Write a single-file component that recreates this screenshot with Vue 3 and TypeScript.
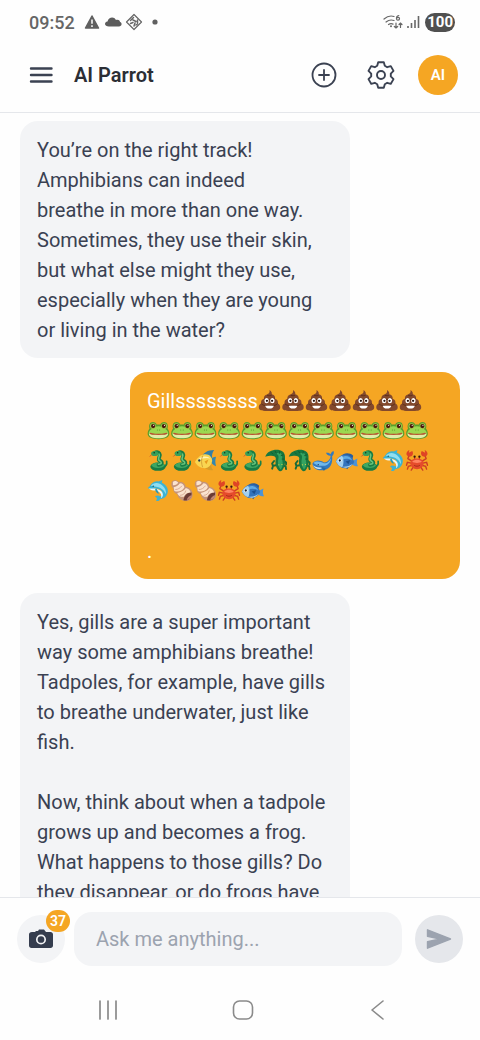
<script setup lang="ts">
import { ref } from 'vue'

type Part = { text?: string; emoji?: string[] }
interface Message {
  id: number
  from: 'parrot' | 'child'
  lines: Part[][]
}

const fill = (name: string, count: number): string[] => Array.from({ length: count }, () => name)

const messages: Message[] = [
  {
    id: 1,
    from: 'parrot',
    lines: [
      [{ text: 'You’re on the right track! Amphibians can indeed' }],
      [{ text: 'breathe in more than one way. Sometimes, they use their skin, but what else might they use, especially when they are young or living in the water?' }],
    ],
  },
  {
    id: 2,
    from: 'child',
    lines: [
      [{ text: 'Gillssssssss' }, { emoji: fill('poo', 7) }],
      [{ emoji: fill('frog', 12) }],
      [{ emoji: ['snake', 'snake', 'tropical-fish', 'snake', 'snake', 'crocodile', 'crocodile', 'whale', 'fish', 'snake', 'dolphin', 'crab'] }],
      [{ emoji: ['dolphin', 'shell', 'shell', 'crab', 'fish'] }],
      [],
      [{ text: '.' }],
    ],
  },
  {
    id: 3,
    from: 'parrot',
    lines: [
      [{ text: 'Yes, gills are a super important way some amphibians breathe! Tadpoles, for example, have gills to breathe underwater, just like fish.' }],
      [],
      [{ text: 'Now, think about when a tadpole grows up and becomes a frog. What happens to those gills? Do they disappear, or do frogs have' }],
    ],
  },
]

const draft = ref('')
const photosLeft = 37
</script>

<template>
  <div class="screen">
    <svg class="sprites" aria-hidden="true">
      <symbol id="poo" viewBox="0 0 24 24">
        <path d="M12 1c2 1.500 3 3 2.200 4.600 2.600.4 4 2.200 3.600 4.500 2.400.7 3.500 2.700 2.900 5 2 .9 3 3 2.300 5.200-.9 2.400-3.600 2.700-11 2.700S1.900 22.700 1 20.300c-.7-2.200.3-4.300 2.300-5.200-.6-2.300.5-4.300 2.900-5-.4-2.400 1-3.800 3.200-4.400C11.300 5 12.600 3.500 12 1z" fill="#83492c" />
        <path d="M9.500 6.500c2 .8 3.500.6 4.800-.2M6.500 10.300c4 1.200 8 .8 11-.6M3.500 15.500c2 1.500 4 2 6 2M20.500 15.200c-1.500 1.500-3.500 2.200-6 2.400" fill="none" stroke="#5a2d18" stroke-width="1" />
        <ellipse cx="9" cy="12.200" rx="2.300" ry="2.700" fill="#fff" /><ellipse cx="15" cy="12.200" rx="2.300" ry="2.700" fill="#fff" />
        <circle cx="9.300" cy="12.300" r="1.200" fill="#29140d" /><circle cx="14.700" cy="12.300" r="1.200" fill="#29140d" />
        <path d="M7.500 17.400h9c-.6 2-2 3-4.500 3s-3.900-1-4.500-3z" fill="#fff" />
      </symbol>
      <symbol id="frog" viewBox="0 0 24 24">
        <path d="M2.600 10C1.500 6 3 3 6.200 3c2.200 0 3.400 1.200 3.900 2.700h3.800C14.400 4.200 15.600 3 17.800 3 21 3 22.500 6 21.400 10c1.500 2 2.200 4.500 1.800 6.500C22.300 19.600 18 21 12 21S1.700 19.600.8 16.500C.4 14.500 1.100 12 2.600 10z" fill="#5a9e2c" />
        <path d="M5 10.500C8 6.500 16 6.500 19 10.500c2.200 1.500 3.500 3 3 5C18 18.500 6 18.500 2 15.500c-.5-2 .8-3.500 3-5z" fill="#9bd850" />
        <circle cx="6.200" cy="7.400" r="3" fill="#a8c648" /><circle cx="17.800" cy="7.400" r="3" fill="#a8c648" />
        <circle cx="6.400" cy="7.400" r="2.200" fill="#4b170e" /><circle cx="17.600" cy="7.400" r="2.200" fill="#4b170e" />
        <circle cx="7" cy="6.600" r=".6" fill="#fff" /><circle cx="18.200" cy="6.600" r=".6" fill="#fff" />
        <path d="M2 15c4 2 6 1.500 10 1.500S18 17 22 15c0 3.500-4.500 5-10 5S2 18.500 2 15z" fill="#e3eda8" />
        <path d="M3.500 15c3 1.400 5 .6 8.500 1 3.500-.4 5.500.4 8.500-1" fill="none" stroke="#bd4d35" stroke-width="1.200" stroke-linecap="round" />
        <circle cx="10.800" cy="11.500" r=".5" fill="#37651c" /><circle cx="13.200" cy="11.500" r=".5" fill="#37651c" />
      </symbol>
      <symbol id="snake" viewBox="0 0 24 24">
        <path d="M17 19c3-1 4-3 3.500-6" fill="none" stroke="#1b8047" stroke-width="1.800" stroke-linecap="round" />
        <ellipse cx="11.500" cy="18.500" rx="8" ry="4.300" fill="#197c44" />
        <ellipse cx="11.500" cy="17" rx="6.500" ry="2.800" fill="#3fa762" />
        <path d="M12 16.500c4-.5 4.500-2.500 1.500-4.200C10 10.500 15 7.500 13 4.800 11.800 3 9.500 3 8 4.200" fill="none" stroke="#197c44" stroke-width="4" stroke-linecap="round" />
        <path d="M12 16c4-.5 3.500-2.300 1-3.700-3-1.700 1.300-4.800-.5-7" fill="none" stroke="#69c47b" stroke-width="1.600" stroke-linecap="round" />
        <ellipse cx="8" cy="4.700" rx="3.700" ry="2.700" fill="#35a05a" /><circle cx="7.500" cy="4" r=".8" fill="#172b19" />
        <path d="M4.800 6 3 7.800" stroke="#c93f32" stroke-width=".8" />
      </symbol>
      <symbol id="tropical-fish" viewBox="0 0 24 24">
        <path d="M8 8C10 4 14 1 21 1c-2 3-2.500 5-2 9z" fill="#347ea4" />
        <path d="M9 17c3 4 7 6 11 5-2-2-2-4-2-6" fill="#d79c28" />
        <path d="M17 12c1.500-3 3.500-4 6-4-1 3-1 6 0 10-3-1-5-3-6-6z" fill="#3487ae" />
        <path d="M1 13.500C4 8 8 5.500 12 5.500c4.500 0 6.500 3 7 7-1 4.500-4 7.500-8 7.500s-8-2.500-10-6.500z" fill="#f9d551" />
        <path d="M4 11c4-4 10-4 13-1-3-1-8-1-11 2z" fill="#fff5b6" />
        <path d="M9 7c-1.500 4-1.500 8 0 12" fill="none" stroke="#d2a136" stroke-width="1" />
        <path d="m11 13 4-2-2 5z" fill="#e79b1e" /><circle cx="5.500" cy="12" r="1.200" fill="#25394a" />
      </symbol>
      <symbol id="crocodile" viewBox="0 0 24 24">
        <path d="M10 12.500 8 15l.5 2M12 17l-3 .5-1 3M20 12l2.500 2v2M19 17l3 1 .5 3" fill="none" stroke="#176b39" stroke-width="2" stroke-linecap="round" />
        <path d="M.8 8C3 2 10 0 16 1.200c4.500 1 6 4.800 5.300 9.300.7 4-.3 9-3 12-1.300 1-2.800 1-3.800-.3C11.500 19 11 14.500 11.800 10c.2-3-4-4-11-2z" fill="#187840" />
        <path d="M16 4c3.500 2 2 6 3 10 .2 3-.8 6-2.300 7.500C14 18 13.500 14 14.500 10 15 7.500 14.500 5.500 11 4.500z" fill="#35a360" />
        <path d="M7 3.500 9 5.500M11 2l1.500 3M16 2l-.5 3M20 6l-3 1M21 10.500h-3" stroke="#0f5930" stroke-width=".9" />
        <circle cx="15" cy="16.500" r=".6" fill="#e8d948" /><circle cx="18.200" cy="16.200" r=".6" fill="#e8d948" />
      </symbol>
      <symbol id="whale" viewBox="0 0 24 24">
        <path d="M1 15c3-4 8-3.500 12-1 4 0 6.500-3 7-7-2 .2-4-.5-5-3 2.500-.5 4 .2 5 1.500.2-1.500 1.500-3 3-3.500.8 2 .2 4-1.500 5.500C22.500 15 19.500 21 13 22 6 23 1.500 20 1 15z" fill="#347abd" />
        <path d="M2 14.500c3-2.500 7-1.500 11 .3 4 .2 6-2.300 7.500-5.800-.5 5-3.500 8.500-8 8.500-4 .2-7.500-.5-10.500-3z" fill="#72b9ea" />
        <path d="M1.500 17c3 2 6 2.500 10 2.500-3 2.500-8 1.500-10-2.500z" fill="#c7e5f6" />
        <path d="m10 18.500 5 1.500-2 3z" fill="#246da9" /><circle cx="7" cy="16.300" r=".7" fill="#152f4b" />
      </symbol>
      <symbol id="fish" viewBox="0 0 24 24">
        <path d="M6 8c2-4 9-5 13-1l-1 4M8 17l5 4 2-5" fill="#285e9e" />
        <path d="m17 13 6.500-3c-1 3-1 5 .5 8-3 0-5.500-1-7-3z" fill="#4c93d6" />
        <path d="M1 13c2-5 6-7 10-7 5 0 8 4 9 7.500-2 4.500-6 6.500-10 6.500-4 0-7-3-9-7z" fill="#3474bd" />
        <path d="M8 8c4-1.500 8 0 10 4-3-2-7-2.500-10-1z" fill="#5faae4" />
        <path d="M1 13c2-4 4-5 6.500-6 1.800 3 1.800 9 0 12C4.800 18.300 3 16.500 1 13z" fill="#a2d0ef" />
        <path d="M7.500 18.500c4 .5 8-.5 11-3-2.500 4-7 5-11 3z" fill="#b7d9e8" />
        <path d="m11 13 5-1.500-2 4.500z" fill="#1d5192" /><circle cx="5" cy="12" r="1.900" fill="#fff" /><circle cx="5" cy="12" r="1.200" fill="#12253a" />
      </symbol>
      <symbol id="dolphin" viewBox="0 0 24 24">
        <path d="M.8 9.500c.7-1 2-1.500 2.700-3C5.500 3 9 2 12 2.500L16 1c-.2 1.200-.3 2-.5 3C21 6.500 23.500 12 20.500 17c-1.500 3-4.500 3.800-7 4-.5 1.800-2 2.200-4 2l1-3-2.200-2c2.200-1 4-.8 5.500.2 2-1.200 2.500-3.200 1.700-5.200-2-3-5-3.500-8-3-2.500.8-5 .8-6.700-.5z" fill="#3cb3d3" />
        <path d="M4 7c3-4 9-3.500 12-.2 3 2.800 4.500 6.200 3.500 9.200C17.500 9.500 12 8 4 7z" fill="#90def0" />
        <path d="M2 9.800C6 10 13 9 16 14c1.200 2.500.5 5-1.500 6 1.500-4-1-7-6-8-2 0-5-.5-6.500-2.200z" fill="#e5f8fa" />
        <path d="m10 10 2.500 5.500C10 15 8.500 13 8.500 10.500z" fill="#2699ba" /><circle cx="6.500" cy="7.500" r=".7" fill="#164452" />
      </symbol>
      <symbol id="shell" viewBox="0 0 24 24">
        <path d="M1.500 2.500C3.500.500 6.500 1 8.500 3c4-.5 6.500 1.500 7.500 5 5 .8 7.500 4.500 7 9-.3 3.800-3.300 6-7 6-5 0-8-3-9-7-3-1-4.300-3-4-6C.800 8 .2 5 1.500 2.500z" fill="#c59479" />
        <path d="M2.500 3C4 1.500 7 2 8 4c-1 2-3.500 3-5.500 2.500zM3.300 8.500c2.200-.3 5-1.500 6.500-4 3 0 4.200 2 4.700 4-2 4-6.500 5.500-10.500 4zM7 14.500c3.500-.5 7-2 9-5 3 .8 4.800 2.500 5 5-3-1-6 1-7 4-3 .5-6-1-7-4z" fill="#fae3cf" />
        <path d="M5 11c3 0 5-1.500 7-4M10 17c3 0 5-1.500 6-5" fill="none" stroke="#cf9e88" stroke-width=".8" />
        <path d="M22 14c-5 0-8 3.500-8.500 8.300C18 23.500 22.500 20 22 14z" fill="#6b3b35" /><path d="M22 17c-2.500.5-4.500 2.500-5 5 3-.5 5-2.500 5-5z" fill="#c18674" />
      </symbol>
      <symbol id="crab" viewBox="0 0 24 24">
        <path d="M7 13 2.500 10l1-3M17 13l4.500-3-1-3M7 15l-5-1-1 3M7 17l-4 1-1 3M8 19l-2 3M17 15l5-1 1 3M17 17l4 1 1 3M16 19l2 3" fill="none" stroke="#cd3e25" stroke-width="1.500" stroke-linecap="round" />
        <path d="M4 8C0 7 0 3 4 1l-.5 3L7 2c2 3 0 6-3 6zM20 8c4-1 4-5 0-7l.500 3L17 2c-2 3 0 6 3 6z" fill="#df4425" />
        <path d="M9.500 11V8M14.500 11V8" stroke="#d43c20" stroke-width="1.200" />
        <path d="M5 14c1-3 4-4 7-4s6 1 7 4c0 4-3 7-7 7s-7-3-7-7z" fill="#e54b2b" />
        <path d="M7 13c3-2.500 7-2.500 10 0-2 2-8 2-10 0z" fill="#ff8462" />
        <path d="M9 17c2 1.300 4 1.300 6 0" fill="none" stroke="#982412" stroke-width=".8" />
        <circle cx="9.500" cy="8" r="1.200" fill="#33160f" /><circle cx="14.500" cy="8" r="1.200" fill="#33160f" />
      </symbol>
    </svg>

    <div class="status">
      <time class="clock">09:52</time>
      <svg class="status-left" width="76" height="20" viewBox="0 0 76 20" aria-hidden="true">
        <path d="M8 4 14.500 16h-13z" fill="#606060" stroke="#606060" stroke-width="1.500" stroke-linejoin="round" />
        <path d="M8 7.500v4.300M8 13.300v1.600" stroke="#fff" stroke-width="1.500" />
        <path d="M25 14.500c-5 0-5-4.500-1.500-5C24.500 5 30 4 32 8c3-.6 4 1 4 2 2.500.5 2 4.500-1 4.500z" fill="#5c5c5c" />
        <path d="m50 2.500 7.500 7.500-7.500 7.500-7.500-7.500z" fill="none" stroke="#666" stroke-width="1.200" stroke-linejoin="round" />
        <path d="m46.500 8.500 3-3M49 8l3 1.500M53.500 8v3M46.500 11.500l2.500-1M51 11l-1 3M52 13l1.500-1" fill="none" stroke="#666" stroke-width="1.500" stroke-linecap="round" />
        <circle cx="71" cy="10" r="2.600" fill="#606060" />
      </svg>
      <svg class="status-right" width="38" height="20" viewBox="0 0 38 20" aria-hidden="true">
        <g fill="none" stroke="#686868" stroke-width="1.200" stroke-linecap="round">
          <path d="M1 7c3.500-3 7-3.500 10-2.500M3 10c2.500-2 5-2.600 8-1.500M5.500 12.500c1.500-1 3-1.200 4.500-.4" />
          <path d="M15.800 3.500c-2 .3-2.500 1.800-2.300 3.500.2 1.700 3 1.500 3-.3 0-1.500-2-1.700-2.900-.5" />
          <path d="M13 11v5m-1.700-1.500L13 16l1.700-1.500M17.500 15.500V11m-1.500 1.500 1.500-1.500 1.500 1.500" />
        </g>
        <circle cx="8" cy="14.300" r="1" fill="#686868" />
        <path d="M25 16v-2M28.500 16v-5M32 16V8M35.500 16V4" fill="none" stroke="#686868" stroke-width="1.600" />
      </svg>
      <span class="battery">100</span>
    </div>

    <header class="header">
      <button class="icon-button" type="button" aria-label="Open menu">
        <svg width="24" height="20" viewBox="0 0 24 20"><path d="M2 3.500h20.500M2 10h20.500M2 16.500h20.500" fill="none" stroke="#3b4252" stroke-width="2.400" stroke-linecap="round" /></svg>
      </button>
      <h1 class="title">AI Parrot</h1>
      <button class="icon-button" type="button" aria-label="New chat">
        <svg width="28" height="28" viewBox="0 0 28 28"><g fill="none" stroke="#3b4252" stroke-width="1.800" stroke-linecap="round"><circle cx="14" cy="14" r="11.500" /><path d="M14 9v10M9 14h10" /></g></svg>
      </button>
      <button class="icon-button gear" type="button" aria-label="Settings">
        <svg width="30" height="30" viewBox="-15 -15 30 30"><g fill="none" stroke="#3b4252" stroke-width="1.900" stroke-linejoin="round"><path d="M-2.800-12.700h5.600L3.800-9.200 6.200-7.800l3.600-1.100 2.700 4.800-2.700 2.700v2.800l2.700 2.700-2.700 4.800-3.600-1.100L3.800 9.200l-1 3.500h-5.600l-1-3.500-2.400-1.400-3.600 1.100-2.700-4.800 2.700-2.700v-2.800l-2.700-2.700 2.700-4.800 3.600 1.100 2.400-1.400z" /><circle r="4" /></g></svg>
      </button>
      <button class="avatar" type="button" aria-label="Account">AI</button>
    </header>

    <main class="chat">
      <article v-for="message in messages" :key="message.id" class="bubble" :class="message.from">
        <p v-for="(line, i) in message.lines" :key="i" class="line">
          <template v-for="(part, j) in line" :key="j">
            <span v-if="part.text">{{ part.text }}</span>
            <svg
              v-else-if="part.emoji"
              class="emoji"
              role="img"
              :aria-label="part.emoji.join(' ')"
              :width="Math.round(part.emoji.length * 23.5)"
              height="23"
            >
              <use v-for="(name, k) in part.emoji" :key="k" :href="'#' + name" :x="k * 23.5" y="0" width="23" height="23" />
            </svg>
          </template>
        </p>
      </article>
    </main>

    <form class="composer" @submit.prevent="draft = ''">
      <button class="round camera" type="button" aria-label="Add photo">
        <svg width="26" height="22" viewBox="0 0 26 22"><path d="M4 4h3.500V3H10l1-1.500h5L18 4h4.500C24 4 25 5 25 6.500v11c0 1.500-1 2.500-2.500 2.500h-19C2 20 1 19 1 17.500v-11C1 5 2 4 4 4z" fill="#353d4e" /><circle cx="13" cy="11.500" r="4.200" fill="none" stroke="#f3f4f6" stroke-width="1.700" /></svg>
        <span class="badge">{{ photosLeft }}</span>
      </button>
      <input v-model="draft" class="field" type="text" placeholder="Ask me anything..." aria-label="Message">
      <button class="round send" type="submit" aria-label="Send">
        <svg width="26" height="22" viewBox="0 0 26 22"><path d="M1.500 1.800v6.400L14 11 1.500 13.800v6.400L24.500 11z" fill="#9ca3af" stroke="#9ca3af" stroke-width="1.400" stroke-linejoin="round" /></svg>
      </button>
    </form>

    <nav class="system-nav" aria-label="System">
      <button class="icon-button" type="button" aria-label="Recent apps"><svg width="24" height="24" viewBox="0 0 24 24"><path d="M4 3v18M12 3v18M20 3v18" stroke="#8a8a8a" stroke-width="1.700" stroke-linecap="round" /></svg></button>
      <button class="icon-button" type="button" aria-label="Home"><svg width="24" height="24" viewBox="0 0 24 24"><rect x="2.500" y="3" width="19" height="18" rx="6" fill="none" stroke="#8a8a8a" stroke-width="1.600" /></svg></button>
      <button class="icon-button" type="button" aria-label="Back"><svg width="24" height="24" viewBox="0 0 24 24"><path d="M17 3 6 12l11 9" fill="none" stroke="#8a8a8a" stroke-width="1.600" stroke-linecap="round" stroke-linejoin="round" /></svg></button>
    </nav>
  </div>
</template>

<style>
body {
  margin: 0;
  background: #fff;
}
</style>

<style scoped>
.screen {
  display: flex;
  flex-direction: column;
  height: 100vh;
  background: #fefefe;
  color: #3a4152;
  font-family: Roboto, "Liberation Sans", sans-serif;
  font-size: 20px;
}

.sprites {
  position: absolute;
  width: 0;
  height: 0;
}

button {
  display: flex;
  align-items: center;
  justify-content: center;
  border: 0;
  padding: 0;
  background: none;
  color: inherit;
  font: inherit;
}

svg {
  flex: none;
}

.status {
  display: flex;
  align-items: center;
  flex: none;
  height: 44px;
  padding: 0 25px 0 29px;
}

.clock {
  color: #666;
  font-size: 18px;
  font-weight: 500;
}

.status-left {
  margin-left: 9px;
}

.status-right {
  margin-left: auto;
}

.battery {
  margin-left: 4px;
  padding: 0 2px;
  border-radius: 10px;
  background: #505050;
  color: #fff;
  font-size: 15px;
  font-weight: 700;
  line-height: 19px;
}

.header {
  display: flex;
  align-items: center;
  flex: none;
  box-sizing: border-box;
  height: 69px;
  padding: 0 22px 7px 29px;
  border-bottom: 1px solid #e5e7eb;
}

.title {
  flex: 1;
  margin: 0 0 0 21px;
  color: #2b2e35;
  font-size: 20px;
  font-weight: 600;
}

.gear {
  margin: 0 22px 0 28px;
}

.avatar {
  width: 40px;
  height: 40px;
  border-radius: 50%;
  background: #f5a623;
  color: #fff;
  font-size: 15px;
  font-weight: 600;
}

.chat {
  display: flex;
  flex: 1;
  flex-direction: column;
  gap: 14px;
  min-height: 0;
  overflow: hidden;
  padding: 8px 20px 0;
}

.bubble {
  flex: none;
  box-sizing: border-box;
  width: 75%;
  padding: 14px 17px 13px;
  border-radius: 18px;
  line-height: 30px;
}

.parrot {
  align-self: flex-start;
  background: #f3f4f6;
}

.child {
  align-self: flex-end;
  background: #f5a623;
  color: #fff;
}

.line {
  display: flow-root;
  min-height: 30px;
  margin: 0;
}

.emoji {
  vertical-align: -4px;
}

.composer {
  display: flex;
  align-items: center;
  flex: none;
  gap: 9px;
  padding: 14px 17px;
  border-top: 1px solid #e5e7eb;
}

.round {
  position: relative;
  flex: none;
  width: 48px;
  height: 48px;
  border-radius: 50%;
}

.camera {
  background: #f3f4f6;
}

.badge {
  position: absolute;
  top: -5px;
  right: -5px;
  min-width: 24px;
  border-radius: 11px;
  background: #f5a623;
  color: #fff;
  font-size: 14px;
  font-weight: 600;
  line-height: 22px;
  text-align: center;
}

.field {
  flex: 1;
  min-width: 0;
  height: 54px;
  box-sizing: border-box;
  padding: 0 22px;
  border: 0;
  border-radius: 18px;
  outline: 0;
  background: #f3f4f6;
  color: inherit;
  font: inherit;
}

.field::placeholder {
  color: #9ca3af;
  opacity: 1;
}

.send {
  margin-left: 4px;
  background: #e5e7eb;
}

.system-nav {
  display: flex;
  align-items: center;
  justify-content: space-between;
  flex: none;
  height: 60px;
  padding: 0 90px 0 96px;
}
</style>
